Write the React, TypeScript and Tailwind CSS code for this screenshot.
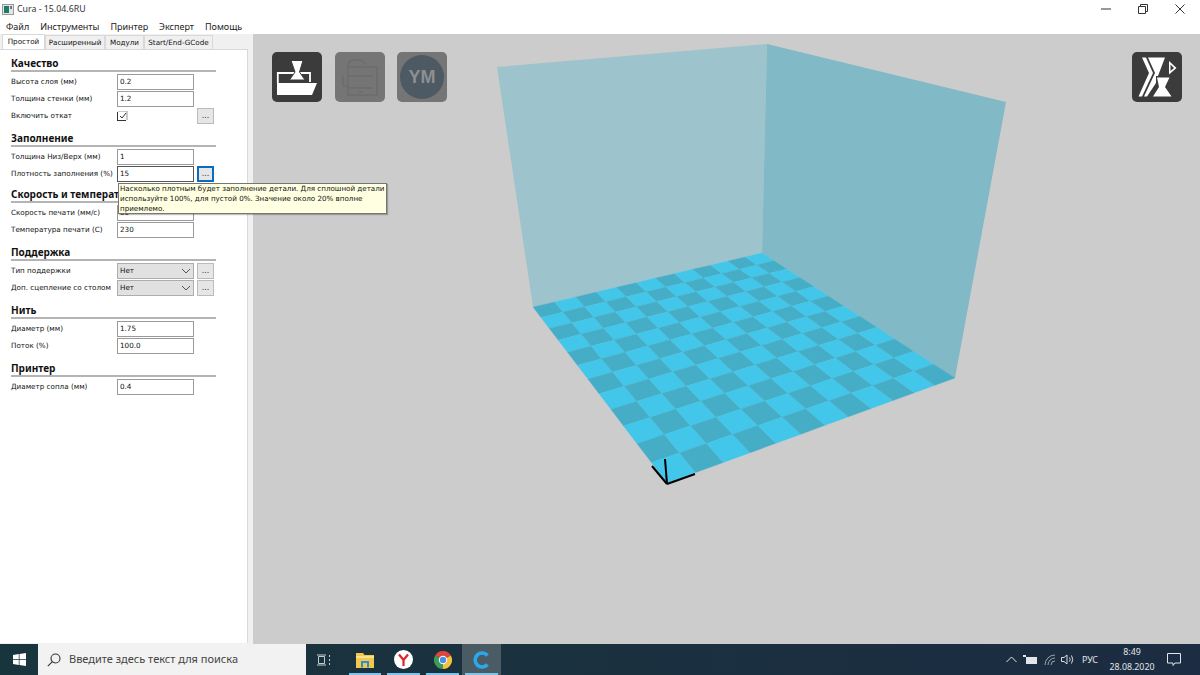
import React from "react";

type Pt = [number, number];
const C: Pt[] = [[533, 307], [762, 253], [955, 378], [667, 483]];

function homography(p: Pt[]) {
  const [[x0, y0], [x1, y1], [x2, y2], [x3, y3]] = p;
  const dx1 = x1 - x2, dx2 = x3 - x2, dx3 = x0 - x1 + x2 - x3;
  const dy1 = y1 - y2, dy2 = y3 - y2, dy3 = y0 - y1 + y2 - y3;
  const det = dx1 * dy2 - dx2 * dy1;
  const g = (dx3 * dy2 - dx2 * dy3) / det;
  const h = (dx1 * dy3 - dx3 * dy1) / det;
  const a = x1 - x0 + g * x1, b = x3 - x0 + h * x3, c = x0;
  const d = y1 - y0 + g * y1, e = y3 - y0 + h * y3, f = y0;
  return (u: number, v: number): string => {
    const w = g * u + h * v + 1;
    return `${((a * u + b * v + c) / w).toFixed(2)},${((d * u + e * v + f) / w).toFixed(2)}`;
  };
}

const map = homography(C);
const N = 12;
const cells: { pts: string; dark: boolean }[] = [];
for (let i = 0; i < N; i++) {
  for (let j = 0; j < N; j++) {
    cells.push({
      pts: [map(i / N, j / N), map((i + 1) / N, j / N), map((i + 1) / N, (j + 1) / N), map(i / N, (j + 1) / N)].join(" "),
      dark: (i + j) % 2 === 0,
    });
  }
}

function Scene() {
  return (
    <svg className="absolute inset-0" width="947" height="610" viewBox="253 34 947 610">
      <polygon points="497,67 767,44 762,253 533,307" fill="#9dc3cc" />
      <polygon points="767,44 1006,102 955,378 762,253" fill="#81b9c7" />
      {cells.map((c, i) => (
        <polygon key={i} points={c.pts} fill={c.dark ? "#45adc6" : "#42c6e9"} stroke={c.dark ? "#45adc6" : "#42c6e9"} strokeWidth="0.3" />
      ))}
      <g stroke="#000" strokeWidth="2" fill="none">
        <path d="M667 484 L665 459" />
        <path d="M667 484 L652 466" />
        <path d="M667 484 L695 474" />
      </g>
    </svg>
  );
}

function Field({ label, value, dots, focus, select }: { label: string; value?: string; dots?: boolean; focus?: boolean; select?: boolean }) {
  return (
    <div className="flex h-[17px] items-start">
      <div className="w-[106px] h-[16px] leading-[16px] text-[7.2px] text-[#111] whitespace-nowrap">{label}</div>
      {select ? (
        <div className="w-[77px] h-[16px] border border-[#adadad] bg-[#e1e1e1] flex items-center justify-between pl-[2px] pr-[2px] text-[7.2px] font-medium text-[#111]">
          <span>{value}</span>
          <svg width="10" height="6" viewBox="0 0 10 6"><path d="M1 1 L5 5 L9 1" stroke="#555" fill="none" strokeWidth="1" /></svg>
        </div>
      ) : label === "Включить откат" ? (
        <div className="w-[77px] h-[16px] flex items-center">
          <div className="w-[9px] h-[9px] border-b border-l border-[#333] relative">
            <svg className="absolute -top-[1px] left-0" width="10" height="10" viewBox="0 0 10 10"><path d="M0 0 H9 V9" stroke="#999" fill="none" /><path d="M2 5 L4 7 L8 2" stroke="#333" fill="none" /></svg>
          </div>
        </div>
      ) : (
        <div className={`w-[77px] h-[16px] border ${focus ? "border-[#555]" : "border-[#9a9a9a]"} bg-white pl-[2px] leading-[14px] text-[7.2px] text-[#111]`}>{value}</div>
      )}
      {dots && (
        <div className={`ml-[3px] w-[17px] h-[16px] ${focus ? "border-2 border-[#0a6cc0]" : "border border-[#bbb]"} bg-[#e6e6e6] flex items-center justify-center text-[8px] leading-[10px] text-[#333]`}>...</div>
      )}
    </div>
  );
}

function Section({ title, children, mb }: { title: string; children: React.ReactNode; mb: string }) {
  return (
    <div className={`w-[205px] ${mb}`}>
      <div className="h-[13px] leading-[13px] text-[10px] font-bold font-['Noto_Sans',sans-serif] text-[#111] whitespace-nowrap">{title}</div>
      <div className="h-[2px] bg-[#b4b4b4]" />
      <div className="pt-[2px]">{children}</div>
    </div>
  );
}

function Tab({ label, w, active }: { label: string; w: string; active?: boolean }) {
  return (
    <div className={`${w} ${active ? "h-[15px] bg-white border-[#d9d9d9] -mb-[1px] z-10" : "h-[14px] mt-[1px] pt-[1px] bg-[#f0f0f0] border-[#d9d9d9]"} border border-b-0 flex items-center justify-center text-[7.2px] text-[#111] whitespace-nowrap`}>
      {label}
    </div>
  );
}

function Tile({ bg, children }: { bg: string; children: React.ReactNode }) {
  return <div className={`w-[50px] h-[50px] rounded-[5px] ${bg} flex items-center justify-center`}>{children}</div>;
}

function TaskIcon({ w, active, underline, children }: { w: string; active?: boolean; underline?: boolean; children: React.ReactNode }) {
  return (
    <div className={`${w} h-full relative flex items-center justify-center ${active ? "bg-[#4a5b64]" : ""}`}>
      {children}
      {underline && <div className="absolute bottom-0 left-[3px] right-[3px] h-[2px] bg-[#7fc4e8]" />}
    </div>
  );
}

export default function App() {
  return (
    <div className="w-[1200px] h-[675px] flex flex-col overflow-hidden bg-white font-['Noto_Sans',sans-serif]">
      {/* title */}
      <div className="h-[18px] flex items-center bg-white shrink-0 relative">
        <svg className="ml-[2px]" width="12" height="11" viewBox="0 0 12 11">
          <rect x="0.5" y="0.5" width="11" height="10" fill="#e4e4e4" stroke="#999" />
          <rect x="2" y="2" width="5" height="7" fill="#1f7a6e" />
          <rect x="8" y="2" width="2" height="3" fill="#777" />
        </svg>
        <span className="ml-[3px] text-[8.8px] leading-[18px] text-[#333] whitespace-nowrap">Cura - 15.04.6RU</span>
        <div className="ml-auto flex items-center">
          <svg width="10" height="10" viewBox="0 0 10 10" className="mr-[27px]"><path d="M0 5 H10" stroke="#333" /></svg>
          <svg width="10" height="10" viewBox="0 0 10 10" className="mr-[27px]"><path d="M0.5 2.5 H7.5 V9.5 H0.5 Z M2.5 2.5 V0.5 H9.5 V7.5 H7.5" stroke="#333" fill="none" /></svg>
          <svg width="10" height="10" viewBox="0 0 10 10" className="mr-[15px]"><path d="M0.5 0.5 L9.5 9.5 M9.5 0.5 L0.5 9.5" stroke="#333" fill="none" /></svg>
        </div>
      </div>
      {/* menu */}
      <div className="h-[16px] flex items-center pl-[6px] pt-[1px] gap-[11px] text-[9px] text-[#222] shrink-0 bg-white">
        <span>Файл</span>
        <span>Инструменты</span>
        <span>Принтер</span>
        <span>Эксперт</span>
        <span>Помощь</span>
      </div>
      <div className="h-[610px] flex shrink-0">
        {/* left */}
        <div className="w-[253px] flex flex-col bg-[#f0f0f0] font-['DejaVu_Sans',sans-serif] relative">
          <div className="flex h-[15px] pl-[2px] shrink-0">
            <Tab label="Простой" w="w-[43px]" active />
            <Tab label="Расширенный" w="w-[60px]" />
            <Tab label="Модули" w="w-[39px]" />
            <Tab label="Start/End-GCode" w="w-[69px]" />
          </div>
          <div className="w-[248px] h-[594px] bg-white border-t border-r border-[#d9d9d9] pl-[11px] pt-[7px]">
            <Section title="Качество" mb="mb-[7px]">
              <Field label="Высота слоя (мм)" value="0.2" />
              <Field label="Толщина стенки (мм)" value="1.2" />
              <Field label="Включить откат" dots />
            </Section>
            <Section title="Заполнение" mb="mb-[5px]">
              <Field label="Толщина Низ/Верх (мм)" value="1" />
              <Field label="Плотность заполнения (%)" value="15" dots focus />
            </Section>
            <Section title="Скорость и температура" mb="mb-[7px]">
              <Field label="Скорость печати (мм/с)" value="50" />
              <Field label="Температура печати (С)" value="230" />
            </Section>
            <Section title="Поддержка" mb="mb-[7px]">
              <Field label="Тип поддержки" value="Нет" dots select />
              <Field label="Доп. сцепление со столом" value="Нет" dots select />
            </Section>
            <Section title="Нить" mb="mb-[7px]">
              <Field label="Диаметр (мм)" value="1.75" />
              <Field label="Поток (%)" value="100.0" />
            </Section>
            <Section title="Принтер" mb="mb-[7px]">
              <Field label="Диаметр сопла (мм)" value="0.4" />
            </Section>
          </div>
          {/* tooltip */}
          <div className="absolute left-[118px] top-[149px] w-[269px] h-[31px] z-20 bg-[#ffffe1] border border-[#767676] pl-[1px] text-[7.15px] leading-[10px] text-[#111] whitespace-nowrap shadow-[1px_1px_1px_rgba(0,0,0,0.25)]">
            <div>Насколько плотным будет заполнение детали. Для сплошной детали</div>
            <div>используйте 100%, для пустой 0%. Значение около 20% вполне</div>
            <div>приемлемо.</div>
          </div>
        </div>
        {/* canvas */}
        <div className="flex-1 relative bg-[#cccccc]">
          <Scene />
          <div className="absolute left-[19px] top-[18px] flex gap-[12.5px]">
            <Tile bg="bg-[#3b3b3b]">
              <svg width="50" height="50" viewBox="0 0 50 50">
                <path d="M5.8 31 V21 H38 V30" stroke="#fff" strokeWidth="1.8" fill="none" />
                <path d="M19 8.5 H31 L27.5 20 L33 28 H17.5 L23 20 Z" fill="#fff" stroke="#3b3b3b" strokeWidth="1" />
                <path d="M5 31 H45 L40 43 H5 Z" fill="#fff" />
              </svg>
            </Tile>
            <Tile bg="bg-[#757575]">
              <svg width="50" height="50" viewBox="0 0 50 50" fill="none" stroke="#6c6c6c" strokeWidth="1.4">
                <path d="M13 14 Q13 8 20 8 H26 L30 12" />
                <rect x="13" y="15" width="29" height="28" />
                <path d="M13 24 H38 M13 36 H38 M8 24 V34 H13 M24 40 H28" />
              </svg>
            </Tile>
            <Tile bg="bg-[#757575]">
              <div className="w-[44px] h-[44px] rounded-full bg-[#4d5a64] flex items-center justify-center text-[18px] font-bold font-['Liberation_Sans',sans-serif] text-[#8f8f8f]">YM</div>
            </Tile>
          </div>
          <div className="absolute right-[18px] top-[18px]">
            <Tile bg="bg-[#3b3b3b]">
              <svg width="50" height="50" viewBox="0 0 50 50" fill="#fff">
                <path d="M10 5.5 H14 L21 21 L10 44.5 H6.5 L17 21 Z" />
                <path d="M16 5.5 H33 L26 24 H24 V31 L15 44.5 H12 L23 21 Z" />
                <path d="M25 25.5 H37.5 L33 35 L39.5 44.5 H21 L27 35 Z" />
                <path d="M37 9 L44.5 16 L37 22.5 Z M38.5 12.5 V19 L42 16 Z" fillRule="evenodd" />
              </svg>
            </Tile>
          </div>
        </div>
      </div>
      {/* taskbar */}
      <div className="h-[31px] flex items-center bg-linear-to-r from-[#18353d] to-[#1c2c42] shrink-0 relative">
        <div className="w-[38px] h-full flex items-center justify-center">
          <svg width="13" height="13" viewBox="0 0 13 13" fill="#fff">
            <path d="M0 2 L5.8 1.1 V6.2 H0 Z M6.5 1 L13 0 V6.2 H6.5 Z M0 6.9 H5.8 V12 L0 11 Z M6.5 6.9 H13 V13 L6.5 12 Z" />
          </svg>
        </div>
        <div className="w-[268px] h-full bg-[#f2f2f2] flex items-center pl-[9px]">
          <svg width="14" height="14" viewBox="0 0 14 14" fill="none" stroke="#333" strokeWidth="1.1"><circle cx="8.5" cy="5.5" r="4.5" /><path d="M5.2 8.8 L0.8 13.2" /></svg>
          <span className="ml-[8px] text-[11px] text-[#444] whitespace-nowrap">Введите здесь текст для поиска</span>
        </div>
        <div className="w-[36px] h-full flex items-center justify-center">
          <svg width="14" height="14" viewBox="0 0 14 14" fill="none" stroke="#c5ccd0"><path d="M0 2 H9 M0 12 H9 M1.5 3.5 H7.5 V10.5 H1.5 Z M12.5 2 V4 M12.5 6 V8 M12.5 10 V12" /></svg>
        </div>
        <div className="w-[4px]" />
        <TaskIcon w="w-[38px]" underline>
          <svg width="18" height="16" viewBox="0 0 18 16">
            <path d="M0 1 H7 L8.5 3 H18 V16 H0 Z" fill="#f3c64c" />
            <rect x="0" y="4" width="18" height="2" fill="#fbe28a" />
            <path d="M5 15.5 V9 H13 V15.5 H11 V11 H7 V15.5 Z" fill="#2a8fd6" />
          </svg>
        </TaskIcon>
        <TaskIcon w="w-[39px]" underline>
          <svg width="19" height="19" viewBox="0 0 19 19">
            <circle cx="9.5" cy="9.5" r="9.5" fill="#fff" />
            <path d="M5 4.5 L9.5 10 L14 4.5 M9.5 10 V16" stroke="#e0222a" strokeWidth="2.2" fill="none" />
          </svg>
        </TaskIcon>
        <TaskIcon w="w-[39px]" underline>
          <svg width="18" height="18" viewBox="0 0 18 18">
            <path d="M9 9 L1.2 4.5 A9 9 0 0 1 16.8 4.5 Z" fill="#e0443a" />
            <path d="M9 9 L16.8 4.5 A9 9 0 0 1 9 18 Z" fill="#f5c23e" />
            <path d="M9 9 L9 18 A9 9 0 0 1 1.2 4.5 Z" fill="#3a9c55" />
            <circle cx="9" cy="9" r="4.2" fill="#fff" />
            <circle cx="9" cy="9" r="3.2" fill="#4a8ef0" />
          </svg>
        </TaskIcon>
        <TaskIcon w="w-[39px]" active underline>
          <svg width="20" height="20" viewBox="0 0 20 20" fill="none">
            <path d="M15.5 5.5 A7 7 0 1 0 15.5 14.5" stroke="#2aa8ec" strokeWidth="3.6" />
          </svg>
        </TaskIcon>
        <div className="ml-auto flex items-center h-full text-[#e2e6e8]">
          <svg width="11" height="7" viewBox="0 0 11 7" fill="none" stroke="#e2e6e8" className="mr-[6.5px]"><path d="M0.5 6 L5.5 1 L10.5 6" /></svg>
          <svg width="14" height="10" viewBox="0 0 14 10" className="mr-[7px]"><rect x="3" y="2" width="11" height="7" fill="#e2e6e8" /><rect x="0" y="0" width="3" height="2" fill="#e2e6e8" /></svg>
          <svg width="12" height="12" viewBox="0 0 12 12" fill="none" stroke="#9aa5ab" className="mr-[4.5px]"><path d="M1 11 A10 10 0 0 1 11 1 M4 11 A7 7 0 0 1 11 4 M7 11 A4 4 0 0 1 11 7" /></svg>
          <svg width="13" height="11" viewBox="0 0 13 11" fill="none" stroke="#d8dde0" className="mr-[7.5px]"><path d="M0.5 3.5 H3 L6 1 V10 L3 7.5 H0.5 Z M8.5 3.5 Q10 5.5 8.5 7.5 M10.5 1.5 Q13 5.5 10.5 9.5" /></svg>
          <span className="text-[9px] w-[18px] mr-[7px] text-center whitespace-nowrap">РУС</span>
          <div className="w-[52px] flex flex-col items-center text-[8.8px] leading-[15px] mr-[9px]">
            <span>8:49</span>
            <span>28.08.2020</span>
          </div>
          <svg width="14" height="13" viewBox="0 0 14 13" fill="none" stroke="#e2e6e8" className="mr-[19px]"><path d="M0.5 0.5 H13.5 V10 H8 L6 12.5 V10 H0.5 Z" /></svg>
        </div>
      </div>
    </div>
  );
}
